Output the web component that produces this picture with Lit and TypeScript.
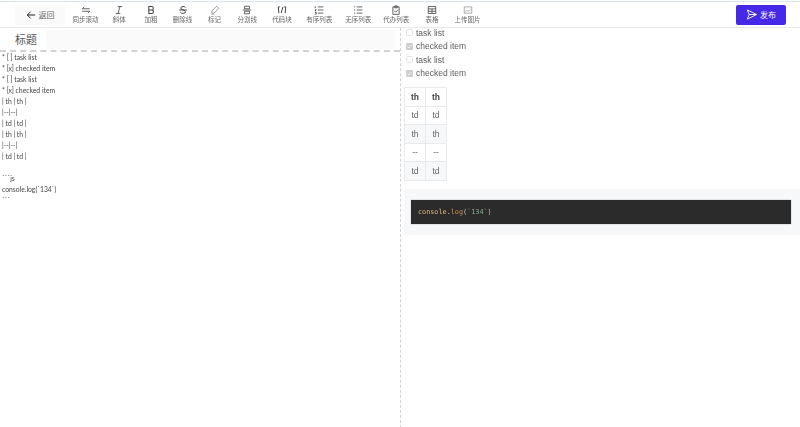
import { LitElement, html, css, svg } from "lit";
import { customElement } from "lit/decorators.js";

const s = (inner: unknown, w = 10) => html`<svg width=${w} height=${w} viewBox="0 0 16 16" fill="none" stroke="#444" stroke-width="1.3">${inner}</svg>`;

const tools: [string, unknown][] = [
  ["同步滚动", s(svg`<path d="M2 6h12M2 6l3-3M14 10H2M14 10l-3 3"/>`)],
  ["斜体", s(svg`<path d="M6 2.5h7M3 13.5h7M9.5 2.5l-3 11"/>`)],
  ["加粗", s(svg`<path stroke-width="1.7" d="M4.500 2.5h4.500a2.700 2.700 0 010 5.500H4.500zM4.500 8h5.200a2.800 2.800 0 010 5.500H4.500z"/>`)],
  ["删除线", s(svg`<path stroke-width="1.6" d="M12 4c-1-2-7-2.500-7.500 .8C4 8 12 7.500 12 11c-.3 3.300-7 3-8.300 .5M2 8h12"/>`)],
  ["标记", s(svg`<path stroke="#888" d="M10.500 2l3.500 3.500-7.500 7.500H3v-3.500zM2 14.500h5"/>`)],
  ["分割线", s(svg`<path d="M4 2h8v4H4zM4 10h8v4H4zM1 8h14"/>`)],
  ["代码块", s(svg`<path stroke-width="1.6" d="M4.500 3L2 3v0l1 10M11.500 3l2.500 0-1 10M9.500 3l-3 10"/>`)],
  ["有序列表", s(svg`<path d="M6 3h9M6 8h9M6 13h9M2 2v3M1.500 7.500h2l-2 2h2M1.500 12h2v2.500h-2"/>`)],
  ["无序列表", s(svg`<path d="M6 3h9M6 8h9M6 13h9M1.500 3h2M1.500 8h2M1.500 13h2"/>`)],
  ["代办列表", s(svg`<path d="M3 3h10v12H3zM6 1.500h4v3H6zM5.500 9.500l2 2 3.500-4"/>`)],
  ["表格", s(svg`<path d="M2 2.500h12v11H2zM2 6.200h12M2 10h12M8 6.200v7.300"/>`)],
  ["上传图片", s(svg`<path stroke="#999" d="M2 3h12v10H2zM4 11l3-3 2 2 3-3M5.500 5.500h.5"/>`)],
];

const source = [
  "* [ ] task list", "* [x] checked item", "* [ ] task list", "* [x] checked item",
  "| th | th |", "|--|--|", "| td | td |", "| th | th |", "|--|--|", "| td | td |",
  "", "```js", "console.log(`134`)", "```",
];

@customElement("app-root")
export class AppRoot extends LitElement {
  static styles = css`
    :host { display: block; width: 800px; height: 427px; overflow: hidden; background: #fff; font-family: "Lato", "Noto Sans CJK SC", sans-serif; color: #333; }
    .top { height: 25px; margin-top: 1px; border-top: 1px solid #d5e9ec; border-bottom: 1px solid #e8e8e8; display: flex; align-items: center; padding: 0 14px 0 15px; }
    .back { width: 50px; height: 20px; background: #fafafa; display: flex; align-items: center; justify-content: center; gap: 3px; font-size: 8px; color: #666; flex: none; }
    .tools { display: grid; grid-template-columns: 35px 32.500px 31px 32px 32px 33.500px 36px 38.500px 39.500px 36.500px 35px 36px; margin-left: 2.500px; flex: 1; will-change: transform; }
    .tool { display: flex; flex-direction: column; align-items: center; font-size: 6.500px; line-height: 8px; color: #666; white-space: nowrap; }
    .tool svg { display: block; margin-bottom: 1px; }
    .pub { width: 50px; height: 20px; box-sizing: border-box; background: #4629e6; border-radius: 2px; color: #fff; display: flex; align-items: center; justify-content: center; gap: 3px; font-size: 8px; flex: none; }
    .main { display: flex; height: 400px; }
    .left { width: 400px; flex: none; border-right: 1px dashed #d2d2d2; }
    .head { height: 22px; display: flex; align-items: center; padding: 0 5px 0 15px; border-bottom: 2px dashed #d2d2d2; gap: 9px; }
    .head .t { font-size: 11px; color: #555; }
    .head .i { flex: 1; height: 19px; background: #fafafa; }
    .src { font-size: 6.800px; line-height: 11px; color: #444; white-space: pre; padding-left: 2px; will-change: transform; }
    .right { flex: 1; padding-left: 3px; font-family: "Liberation Sans", Arial, "Noto Sans CJK SC", sans-serif; min-width: 0; will-change: transform; }
    .task { height: 13.500px; display: flex; align-items: center; font-size: 8.500px; color: #5c5c5c; gap: 3px; padding-left: 2px; }
    .task svg { display: block; flex: none; }
    .tasks { margin-top: -2px; margin-bottom: 7px; }
    table { border-collapse: collapse; font-size: 8.500px; color: #666; }
    th, td { border: 1px solid #e8eaec; width: 20px; height: 17.500px; padding: 0; text-align: center; }
    th { font-weight: 700; color: #444; }
    tr.z td { background: #f6f8fa; }
    .block { margin-top: 8px; height: 46px; background: #f6f8fa; padding: 11px 9px 0 7px; box-sizing: border-box; }
    .code { height: 24px; background: #2b2b2b; padding-left: 7px; display: flex; align-items: center; font-family: "DejaVu Sans Mono", "Liberation Mono", monospace; font-size: 6.800px; color: #ccc; white-space: pre; box-shadow: 0 0 1px #888; }
    .o { color: #e0b880; } .f { color: #d09050; } .g { color: #85b085; }
  `;
  private box(checked: number) {
    return checked
      ? html`<svg width="7" height="7" viewBox="0 0 7 7"><rect width="7" height="7" rx="1" fill="#cfcfcf"/><path d="M1.500 3.500l1.500 1.500 2.500-3" fill="none" stroke="#f4f4f4" stroke-width=".9"/></svg>`
      : html`<svg width="7" height="7" viewBox="0 0 7 7"><rect x=".5" y=".5" width="6" height="6" rx="1" fill="#fdfdfd" stroke="#e2e2e2"/></svg>`;
  }
  render() {
    return html`
      <div class="top">
        <div class="back">
          <svg width="10" height="10" viewBox="0 0 12 12" fill="none" stroke="#222" stroke-width="1.200"><path d="M11 6H1.500M5.500 2L1.500 6l4 4"/></svg>
          <span>返回</span>
        </div>
        <div class="tools">${tools.map(([l, i]) => html`<div class="tool">${i}<span>${l}</span></div>`)}</div>
        <div class="pub">
          <svg width="11" height="11" viewBox="0 0 12 12" fill="none" stroke="#fff" stroke-width="1"><path d="M1.500 1l10 5-10 5 2-5zM3.500 6h8"/></svg>
          <span>发布</span>
        </div>
      </div>
      <div class="main">
        <div class="left">
          <div class="head"><span class="t">标题</span><div class="i"></div></div>
          <div class="src">${source.map((l) => html`<div>${l || " "}</div>`)}</div>
        </div>
        <div class="right">
          <div class="tasks">
            ${[0, 1, 0, 1].map((c) => html`<div class="task">${this.box(c)}<span>${c ? "checked item" : "task list"}</span></div>`)}
          </div>
          <table>
            <tr><th>th</th><th>th</th></tr>
            <tr><td>td</td><td>td</td></tr>
            <tr class="z"><td>th</td><td>th</td></tr>
            <tr><td>--</td><td>--</td></tr>
            <tr class="z"><td>td</td><td>td</td></tr>
          </table>
          <div class="block">
            <div class="code"><span><span class="o">console</span>.<span class="f">log</span>(<span class="g">\`134\`</span>)</span></div>
          </div>
        </div>
      </div>
    `;
  }
}
